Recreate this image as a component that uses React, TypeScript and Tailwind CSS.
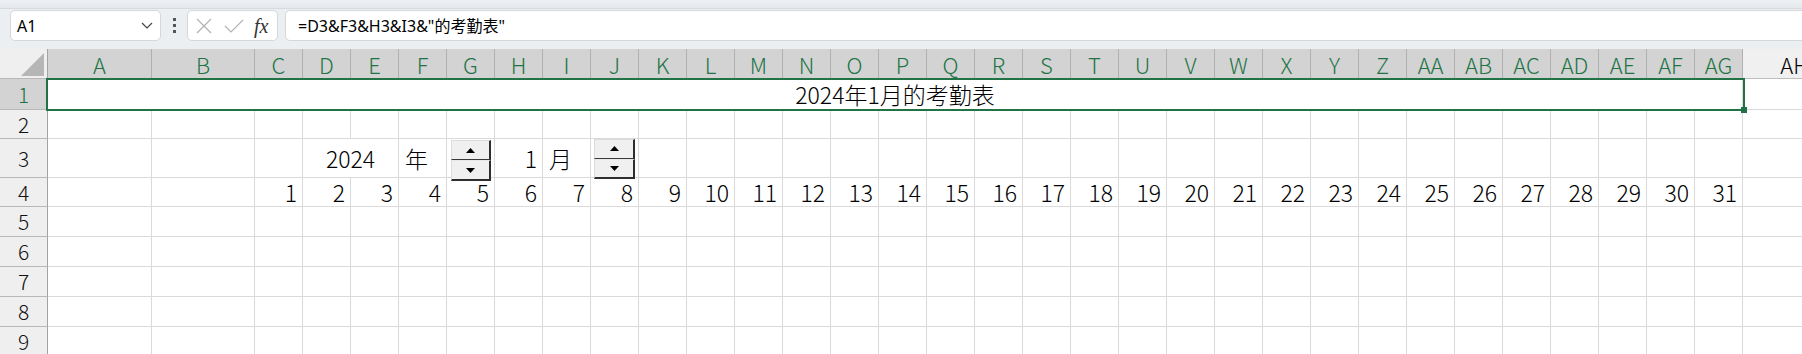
import React from "react";

const NARROW = [
  "C","D","E","F","G","H","I","J","K","L","M","N","O","P","Q","R","S","T","U","V","W","X","Y","Z",
  "AA","AB","AC","AD","AE","AF","AG",
];

const SHEET_FONT = "font-['Noto_Sans_CJK_SC',sans-serif] font-light";
const GRID = "border-r border-b border-[#dadada]";

type Cell = { w: string; text?: string; align?: "l" | "r" | "c" };

function alignClass(a?: "l" | "r" | "c") {
  if (a === "r") return "justify-end pr-[5px]";
  if (a === "l") return "justify-start pl-[6px]";
  return "justify-center";
}

function RowHeader({ n, selected }: { n: number; selected?: boolean }) {
  return (
    <div
      className={`w-[48px] shrink-0 h-full flex items-center justify-center border-r border-b border-r-[#a3a3a3] border-b-[#b8b8b8] text-[21px] leading-none ${
        selected ? "bg-[#d3d3d3] text-[#217346]" : "bg-[#efefef] text-[#111]"
      }`}
    >
      {n}
    </div>
  );
}

function SheetRow({ h, n, selected, cells }: { h: string; n: number; selected?: boolean; cells: Cell[] }) {
  return (
    <div className={`flex shrink-0 ${h}`}>
      <RowHeader n={n} selected={selected} />
      {cells.map((c, i) => (
        <div
          key={i}
          className={`${c.w} shrink-0 h-full flex items-center ${GRID} ${alignClass(c.align)} text-[23px] leading-none text-black pt-[1px]`}
        >
          {c.text}
        </div>
      ))}
    </div>
  );
}

function emptyCells(): Cell[] {
  return [
    { w: "w-[104px]" },
    { w: "w-[103px]" },
    ...NARROW.map(() => ({ w: "w-[48px]" })),
    { w: "w-[104px]" },
  ];
}

function Spinner({ pos }: { pos: string }) {
  return (
    <div className={`absolute ${pos} flex flex-col`}>
      <div className="flex-1 flex items-center justify-center bg-[#f0f0f0] border-t border-l border-t-[#dcdcdc] border-l-[#dcdcdc] border-r-2 border-b border-r-[#2e2e2e] border-b-[#3a3a3a]">
        <svg width="9" height="5" viewBox="0 0 9 5">
          <polygon points="0,5 9,5 4.5,0" fill="#000" />
        </svg>
      </div>
      <div className="flex-1 flex items-center justify-center bg-[#f0f0f0] border-t border-l border-t-[#e8e8e8] border-l-[#dcdcdc] border-r-2 border-b-2 border-r-[#2e2e2e] border-b-[#2e2e2e]">
        <svg width="9" height="5" viewBox="0 0 9 5">
          <polygon points="0,0 9,0 4.5,5" fill="#000" />
        </svg>
      </div>
    </div>
  );
}

export default function App() {
  const row1: Cell[] = [
    { w: "w-[1695px]", text: "2024年1月的考勤表", align: "c" },
    { w: "w-[104px]" },
  ];

  const row3: Cell[] = [
    { w: "w-[104px]" },
    { w: "w-[103px]" },
    { w: "w-[48px]" },
    { w: "w-[96px]", text: "2024", align: "c" },
    { w: "w-[48px]", text: "年", align: "l" },
    { w: "w-[48px]" },
    { w: "w-[48px]", text: "1", align: "r" },
    { w: "w-[48px]", text: "月", align: "l" },
    ...NARROW.slice(7).map(() => ({ w: "w-[48px]" })),
    { w: "w-[104px]" },
  ];

  const row4: Cell[] = [
    { w: "w-[104px]" },
    { w: "w-[103px]" },
    ...NARROW.map((_, i) => ({ w: "w-[48px]", text: String(i + 1), align: "r" as const })),
    { w: "w-[104px]" },
  ];

  return (
    <div className="relative w-[1802px] h-[354px] overflow-hidden bg-white">
      {/* Formula bar area */}
      <div className="h-[49px] flex flex-col bg-[#eceff2] font-['Noto_Sans','Noto_Sans_CJK_SC',sans-serif]">
        <div className="h-[9px] shrink-0 bg-gradient-to-b from-[#eef0f3] to-[#e4e7eb] border-b border-[#d6d9dd]" />
        <div className="flex items-start pt-[1px] pl-[10px]">
          <div className="w-[151px] h-[31px] shrink-0 bg-white rounded-[5px] border border-[#d5d7da] flex items-center pl-[6px] pr-[7px]">
            <span className="text-[16px] text-black leading-none">A1</span>
            <svg className="ml-auto" width="12" height="7" viewBox="0 0 12 7">
              <polyline points="1,1 6,6 11,1" fill="none" stroke="#444" strokeWidth="1.2" />
            </svg>
          </div>
          <div className="w-[26px] h-[31px] shrink-0 flex flex-col items-center justify-center gap-[3px]">
            <div className="w-[3px] h-[3px] bg-[#555]" />
            <div className="w-[3px] h-[3px] bg-[#555]" />
            <div className="w-[3px] h-[3px] bg-[#555]" />
          </div>
          <div className="w-[91px] h-[31px] shrink-0 bg-white rounded-[5px] border border-[#d5d7da] flex items-center pl-[8px]">
            <svg width="16" height="16" viewBox="0 0 16 16">
              <line x1="1" y1="1" x2="15" y2="15" stroke="#b3b3b3" strokeWidth="1.2" />
              <line x1="15" y1="1" x2="1" y2="15" stroke="#b3b3b3" strokeWidth="1.2" />
            </svg>
            <svg className="ml-[12px]" width="20" height="14" viewBox="0 0 20 14">
              <polyline points="1,7 7,13 19,1" fill="none" stroke="#b3b3b3" strokeWidth="1.2" />
            </svg>
            <span className="ml-[10px] text-[20px] italic leading-none text-[#333] font-['Liberation_Serif',serif]">fx</span>
          </div>
          <div className="ml-[7px] w-[1530px] h-[31px] shrink-0 bg-white rounded-l-[5px] border border-[#d5d7da] flex items-center pl-[12px]">
            <span className="text-[16px] text-black leading-none">=D3&amp;F3&amp;H3&amp;I3&amp;"的考勤表"</span>
          </div>
        </div>
      </div>

      {/* Sheet */}
      <div className={`flex flex-col ${SHEET_FONT}`}>
        {/* Column headers */}
        <div className="flex h-[30px] shrink-0">
          <div className="w-[48px] shrink-0 h-full bg-[#efefef] border-r border-b border-r-[#a3a3a3] border-b-[#b8b8b8] relative">
            <svg className="absolute right-[3px] bottom-[2px]" width="23" height="23" viewBox="0 0 23 23">
              <polygon points="23,0 23,23 0,23" fill="#b6b6b6" />
            </svg>
          </div>
          <div className="w-[104px] shrink-0 h-full flex items-center justify-center bg-[#d3d3d3] border-r border-b border-r-[#b0b0b0] border-b-[#217346] text-[22px] leading-none text-[#217346]">A</div>
          <div className="w-[103px] shrink-0 h-full flex items-center justify-center bg-[#d3d3d3] border-r border-b border-r-[#b0b0b0] border-b-[#217346] text-[22px] leading-none text-[#217346]">B</div>
          {NARROW.map((l) => (
            <div
              key={l}
              className="w-[48px] shrink-0 h-full flex items-center justify-center bg-[#d3d3d3] border-r border-b border-r-[#b0b0b0] border-b-[#217346] text-[22px] leading-none text-[#217346]"
            >
              {l}
            </div>
          ))}
          <div className="w-[104px] shrink-0 h-full flex items-center justify-center bg-[#f0f0f0] border-r border-b border-r-[#b8b8b8] border-b-[#bdbdbd] text-[22px] leading-none text-black">AH</div>
        </div>

        <SheetRow h="h-[31px]" n={1} selected cells={row1} />
        <SheetRow h="h-[29px]" n={2} cells={emptyCells()} />
        <SheetRow h="h-[39px]" n={3} cells={row3} />
        <SheetRow h="h-[29px]" n={4} cells={row4} />
        <SheetRow h="h-[30px]" n={5} cells={emptyCells()} />
        <SheetRow h="h-[30px]" n={6} cells={emptyCells()} />
        <SheetRow h="h-[30px]" n={7} cells={emptyCells()} />
        <SheetRow h="h-[30px]" n={8} cells={emptyCells()} />
        <SheetRow h="h-[30px]" n={9} cells={emptyCells()} />
      </div>

      {/* Selection border over merged A1:AG1 */}
      <div className="absolute left-[46px] top-[78px] w-[1699px] h-[33px] border-2 border-[#217346] pointer-events-none" />
      <div className="absolute left-[1741px] top-[107px] w-[6px] h-[6px] bg-[#217346]" />

      {/* Spin buttons */}
      <Spinner pos="left-[451px] top-[140px] w-[40px] h-[41px]" />
      <Spinner pos="left-[594px] top-[139px] w-[41px] h-[40px]" />
    </div>
  );
}
